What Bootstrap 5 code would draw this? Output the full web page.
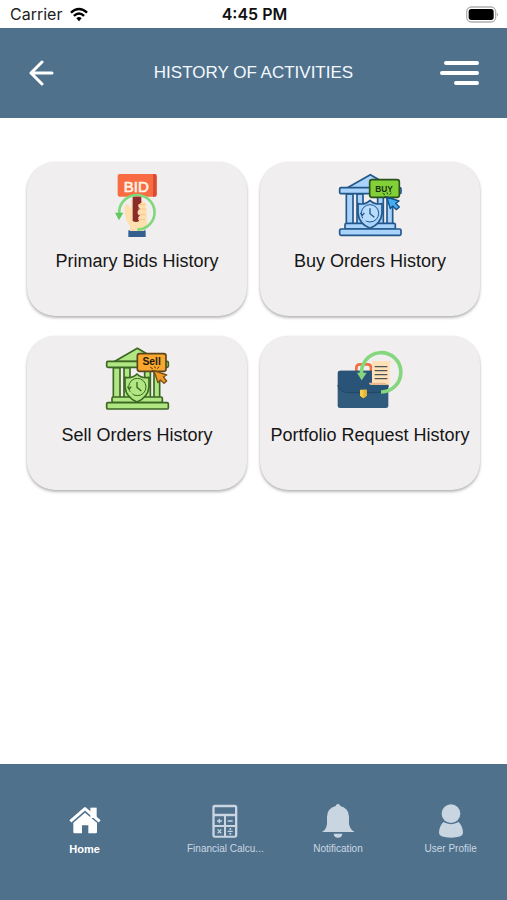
<!DOCTYPE html>
<html lang="en">
<head>
<meta charset="utf-8">
<meta name="viewport" content="width=device-width, initial-scale=1">
<title>History of Activities</title>
<link href="https://cdn.jsdelivr.net/npm/bootstrap@5.3.0/dist/css/bootstrap.min.css" rel="stylesheet">
<style>
  body { font-family: "Liberation Sans", sans-serif; background: #fff; }
  .bar { background: #4f718c; color: #f4f9ff; }
  .status { height: 28px; font: 16px/28px Inter, sans-serif; color: #222; padding: 0 8px 0 10px; }
  .status-side { flex: 1 1 0; }
  .status-time { font-weight: 600; color: #111; }
  .app-header { height: 90px; padding: 0 28px; }
  .app-title { font-size: 17px; line-height: 32px; }
  .icon-btn { width: 40px; height: 40px; }
  .icon-btn svg { margin: auto 0; }
  .tiles { padding: 44px 27px; display: grid; grid-template-columns: 1fr 1fr; gap: 20px 13px; }
  .tile { min-height: 154px; padding-top: 3px; border-radius: 28px; background: #f0eeef; color: #161616;
          box-shadow: 0 2px 3px rgba(0,0,0,.27), 0 0 2px rgba(0,0,0,.08); font-size: 18px; line-height: 32px; text-align: center; }
  .tab-bar { height: 136px; padding-top: 37px; }
  .tab { flex: 2 1 0; color: #cbd8e3; font-size: 10px; line-height: 16px; }
  .tab-home { flex-grow: 3; color: #fff; font-size: 11px; font-weight: 700; }
</style>
</head>
<body>
<div class="d-flex flex-column min-vh-100">
  <div class="status d-flex align-items-center">
    <div class="status-side d-flex align-items-center gap-2">
      <span>Carrier</span>
      <svg width="18" height="15" viewBox="0 0 60 47" fill="none" stroke="#000" stroke-width="8" aria-hidden="true">
        <path d="M3 17Q30-7 57 17M13 28Q30 12 47 28"/><path d="M21 36Q30 28 39 36L30 46Z" fill="#000" stroke="none"/>
      </svg>
    </div>
    <span class="status-time">4:45 PM</span>
    <div class="status-side d-flex justify-content-end">
      <svg width="33" height="17" viewBox="0 0 99 51" aria-hidden="true">
        <rect x="2" y="3" width="87" height="45" rx="14" fill="#fff" stroke="#b0b0b0" stroke-width="4"/>
        <rect x="8" y="9" width="75" height="33" rx="8"/><path d="M93 20Q99 25 93 31Z" fill="#aaa"/>
      </svg>
    </div>
  </div>

  <header class="bar app-header d-flex align-items-center justify-content-between">
    <button type="button" class="icon-btn btn d-flex p-0 border-0" aria-label="Back">
      <svg width="27" height="26" viewBox="0 0 27 26" fill="none" stroke="#fff" stroke-width="3" stroke-linecap="round" stroke-linejoin="round"><path d="M14 2 3 13 14 24M3 13H24"/></svg>
    </button>
    <h1 class="app-title fw-normal m-0">HISTORY OF ACTIVITIES</h1>
    <button type="button" class="icon-btn btn d-flex p-0 border-0" aria-label="Menu">
      <svg width="40" height="26" viewBox="0 0 40 26" stroke="#fff" stroke-width="4" stroke-linecap="round"><path d="M7 3H38M3 13H38M17 23H38"/></svg>
    </button>
  </header>

  <main class="flex-grow-1">
    <div class="tiles">
      <a href="#bids" class="tile d-flex flex-column align-items-center text-decoration-none">
        <svg width="80" height="80" viewBox="-22 0 240 240" aria-hidden="true">
          <rect x="72" y="196" width="52" height="20" fill="#365f91"/>
          <path d="M77 198V184L66 166Q59 146 61 126Q62 115 71 118L80 132V104H108L124 114Q129 122 124 128Q131 136 126 144Q131 152 126 160L129 174Q127 187 118 198Z" fill="#ffdfad"/>
          <path d="M85 94H111V113L102 119V126L108 131L100 138V146L107 151L101 158Q106 163 104 169Q94 174 85 168Z" fill="#8a2c2c"/>
          <path d="M103 119H122M102 132H125M101 149H124M101 164H123" stroke="#f4c58c" stroke-width="3"/>
          <rect x="40" y="27" width="117" height="68" rx="6" fill="#f96c43"/>
          <path d="M146 27H151Q157 27 157 34V88Q157 95 151 95H146Z" fill="#d84c35"/>
          <text x="96" y="80" text-anchor="middle" font-family="Liberation Sans, sans-serif" font-size="45" fill="#fff4e5" stroke="#fff4e5" stroke-width="2">BID</text>
          <path d="M45 148A53 52 0 1 1 99 194" fill="none" stroke="#7fd87a" stroke-width="8"/>
          <path d="M32 143H57L44 166Z" fill="#61c862"/>
        </svg>
        <span>Primary Bids History</span>
      </a>

      <a href="#buy" class="tile d-flex flex-column align-items-center text-decoration-none">
        <svg width="80" height="80" viewBox="0 0 240 240" aria-hidden="true">
          <g fill="#a9d3fb" stroke="#235789" stroke-width="5" stroke-linejoin="round">
            <path d="M51 69 121 29 190 69Z"/>
            <path d="M49 87H69V178H49ZM81 87H99V178H81ZM143 87H160V178H143ZM171 87H188V178H171Z"/>
            <rect x="29" y="68" width="184" height="18" rx="4"/>
            <rect x="45" y="175" width="151" height="17" rx="4"/><rect x="29" y="192" width="184" height="19" rx="4"/>
            <path d="M84 116Q106 120 120 106Q134 120 156 116V145Q153 176 120 190Q87 176 84 145Z"/>
            <circle cx="120" cy="145" r="26" fill="#b9dcfc" stroke-width="3"/>
          </g>
          <path d="M120 130V146L133 157M91 144 97 151 103 144" fill="none" stroke="#235789" stroke-width="4"/>
          <path d="M99 160 106 169M107 173 113 175" stroke="#b9dcfc" stroke-width="5"/>
          <rect x="119" y="44" width="89" height="53" rx="7" fill="#82cf38" stroke="#2b521e" stroke-width="5"/>
          <text x="162" y="80" text-anchor="middle" font-family="Liberation Sans, sans-serif" font-size="25" font-weight="700" fill="#173314">BUY</text>
          <path d="M158 85 165 89M171 82 173 88M184 83 179 89M162 97 168 94" stroke="#24491b" stroke-width="3"/>
          <path d="M170 96 207 108 197 115 208 126 199 134 188 123 181 131Z" fill="#43aff2" stroke="#175083" stroke-width="4" stroke-linejoin="round"/>
        </svg>
        <span>Buy Orders History</span>
      </a>

      <a href="#sell" class="tile d-flex flex-column align-items-center text-decoration-none">
        <svg width="80" height="80" viewBox="-3 -3 240 240" aria-hidden="true">
          <g fill="#b1e782" stroke="#3b6623" stroke-width="5" stroke-linejoin="round">
            <path d="M48 65 118 25 187 65Z"/>
            <path d="M46 83H66V174H46ZM78 83H96V174H78ZM140 83H157V174H140ZM168 83H185V174H168Z"/>
            <rect x="26" y="64" width="185" height="18" rx="4"/>
            <rect x="42" y="171" width="151" height="17" rx="4"/><rect x="26" y="188" width="185" height="19" rx="4"/>
            <path d="M81 112Q103 116 117 102Q131 116 153 112V141Q150 172 117 186Q84 172 81 141Z"/>
            <circle cx="118" cy="141" r="26" stroke-width="3"/>
          </g>
          <path d="M117 126V142L130 153M88 140 94 147 100 140" fill="none" stroke="#3b6623" stroke-width="4"/>
          <path d="M96 156 103 165M104 169 110 171" stroke="#b1e782" stroke-width="5"/>
          <rect x="118" y="41" width="86" height="53" rx="7" fill="#f9a72e" stroke="#5d451d" stroke-width="5"/>
          <text x="161" y="76" text-anchor="middle" font-family="Liberation Sans, sans-serif" font-size="31" font-weight="700" fill="#241b0c">Sell</text>
          <path d="M157 82 164 86M170 79 172 85M183 80 178 86M160 94 166 91" stroke="#49300d" stroke-width="3"/>
          <path d="M168 92 206 105 196 111 206 123 198 130 187 120 180 128Z" fill="#f49b25" stroke="#76501b" stroke-width="4" stroke-linejoin="round"/>
        </svg>
        <span>Sell Orders History</span>
      </a>

      <a href="#portfolio" class="tile d-flex flex-column align-items-center text-decoration-none">
        <svg width="80" height="80" viewBox="0 -3 240 240" aria-hidden="true">
          <path d="M79 94V84Q79 73 90 73H113Q123 73 123 84V94" fill="none" stroke="#ef7044" stroke-width="8"/>
          <rect x="23" y="92" width="152" height="112" rx="7" fill="#315b7d"/>
          <path d="M24 98Q24 92 31 92H168Q175 92 175 99V139Q168 157 145 158H54Q29 156 24 139Z" fill="#295477"/>
          <path d="M23 136Q30 157 54 158H145Q168 157 175 138" fill="none" stroke="#214665" stroke-width="3"/>
          <path d="M126 63H183L179 72V134H126Z" fill="#ffe0b7"/>
          <path d="M117 128H166Q168 135 174 135H126Q117 135 117 128Z" fill="#e8b98e"/>
          <path d="M134 80H172M134 92H172M134 104H172M134 116H172" stroke="#4b5459" stroke-width="4"/>
          <path d="M90 149H110V166Q109 171 100 175Q91 171 90 166Z" fill="#f7ce4b"/><path d="M100 149H110V166Q109 171 100 175Z" fill="#e9b831"/>
          <path d="M95 104A59 59 0 1 1 153 156" fill="none" stroke="#85d77d" stroke-width="11"/>
          <path d="M81 98H110L95 121Z" fill="#85d77d"/>
        </svg>
        <span>Portfolio Request History</span>
      </a>
    </div>
  </main>

  <nav class="bar tab-bar d-flex align-items-start text-nowrap" aria-label="Main">
    <a href="#home" class="tab tab-home d-flex flex-column align-items-center text-decoration-none" aria-current="page">
      <svg width="40" height="40" viewBox="45 33 120 120" fill="#fff" aria-hidden="true">
        <path d="M121 53H140V84H121Z"/>
        <path d="M61 94 105 56 149 94" fill="none" stroke="#fff" stroke-width="9" stroke-linejoin="round"/>
        <path d="M70 98 105 68 141 98V126Q141 130 137 130H115V106H96V130H74Q70 130 70 126Z"/>
      </svg>
      <span>Home</span>
    </a>
    <a href="#calculator" class="tab d-flex flex-column align-items-center text-decoration-none">
      <svg width="40" height="40" viewBox="468 33 120 120" fill="#c9d6e1" aria-hidden="true">
        <path fill-rule="evenodd" d="M498 44H557Q565 44 565 52V135Q565 143 557 143H498Q490 143 490 135V52Q490 44 498 44ZM497 52V71H558V52ZM497 79V105H525V79ZM531 79V105H558V79ZM497 111V137H525V111ZM531 111V137H558V111Z"/>
        <path d="M504 93H519M511 86V100M536 93H551M506 118 517 130M517 118 506 130M536 124H551" fill="none" stroke="#c9d6e1" stroke-width="4"/><circle cx="544" cy="117" r="3"/><circle cx="544" cy="131" r="3"/>
      </svg>
      <span>Financial Calcu...</span>
    </a>
    <a href="#notification" class="tab d-flex flex-column align-items-center text-decoration-none">
      <svg width="40" height="40" viewBox="85 33 120 120" fill="#c9d6e1" aria-hidden="true">
        <path d="M138 48Q139 42 145 42T152 48Q177 54 178 81V101Q180 117 195 126H97Q111 117 112 101V81Q113 54 138 48ZM132 131H158Q157 143 145 143T132 131Z"/>
      </svg>
      <span>Notification</span>
    </a>
    <a href="#profile" class="tab d-flex flex-column align-items-center text-decoration-none">
      <svg width="40" height="40" viewBox="423 33 120 120" fill="#c9d6e1" aria-hidden="true">
        <circle cx="483" cy="71" r="28"/><path d="M460 96Q483 109 506 96Q519 109 519 130Q517 143 483 143T447 130Q447 109 460 96Z"/>
      </svg>
      <span>User Profile</span>
    </a>
  </nav>
</div>
<script src="https://cdn.jsdelivr.net/npm/bootstrap@5.3.0/dist/js/bootstrap.bundle.min.js"></script>
</body>
</html>
